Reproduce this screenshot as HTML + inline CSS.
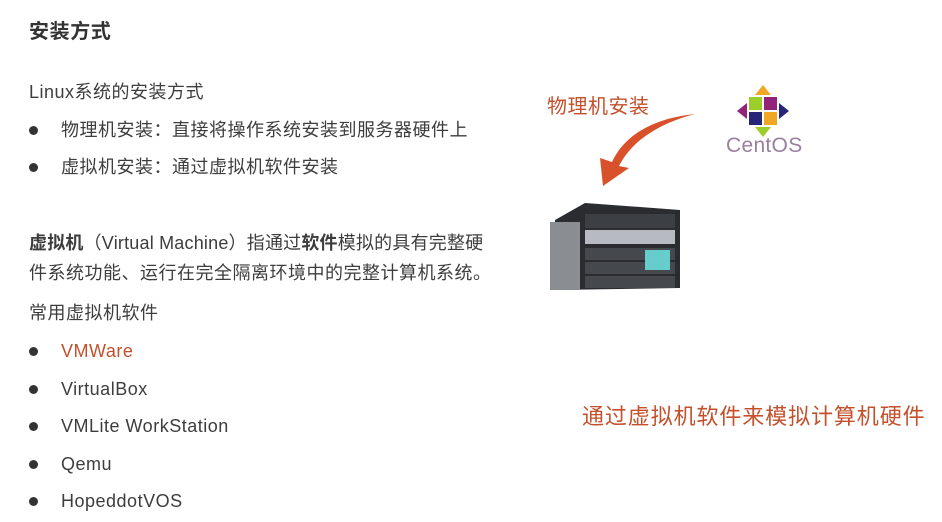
<!DOCTYPE html><html><head><meta charset="utf-8"><style>
body{margin:0;width:942px;height:522px;background:#fff;overflow:hidden;position:relative;font-family:"Liberation Sans","Noto Sans CJK SC",sans-serif;color:#3d3d3d}
.t{position:absolute;white-space:nowrap;font-size:18px;line-height:20px;letter-spacing:0.5px}
.d{position:absolute;width:9px;height:9px;border-radius:50%;background:#333;left:29px}
.r{color:#c4502c}
</style></head><body>
<div class="t" style="left:29px;top:22px;font-size:20px;font-weight:bold;color:#333;letter-spacing:0.6px">安装方式</div>
<div class="t" style="left:29px;top:82px">Linux系统的安装方式</div>
<div class="d" style="top:126px"></div><div class="t" style="left:61px;top:120px">物理机安装：直接将操作系统安装到服务器硬件上</div>
<div class="d" style="top:163px"></div><div class="t" style="left:61px;top:157px">虚拟机安装：通过虚拟机软件安装</div>
<div class="t" style="left:29px;top:233px;letter-spacing:0.2px"><b>虚拟机</b>（Virtual Machine）指通过<b>软件</b>模拟的具有完整硬</div>
<div class="t" style="left:29px;top:263px">件系统功能、运行在完全隔离环境中的完整计算机系统。</div>
<div class="t" style="left:29px;top:303px">常用虚拟机软件</div>
<div class="d" style="top:347px"></div><div class="t r" style="left:61px;top:341px">VMWare</div>
<div class="d" style="top:385px"></div><div class="t" style="left:61px;top:379px">VirtualBox</div>
<div class="d" style="top:422px"></div><div class="t" style="left:61px;top:416px">VMLite WorkStation</div>
<div class="d" style="top:460px"></div><div class="t" style="left:61px;top:454px">Qemu</div>
<div class="d" style="top:497px"></div><div class="t" style="left:61px;top:491px">HopeddotVOS</div>
<div class="t r" style="left:547px;top:97px;font-size:20px">物理机安装</div>
<div class="t r" style="left:582px;top:405px;font-size:22px;line-height:24px;letter-spacing:0.9px">通过虚拟机软件来模拟计算机硬件</div>
<svg style="position:absolute;left:585px;top:112px" width="115" height="78"><path d="M110 2 C70 6 40 22 27 50 L15 46 L18 74 L44 56 L34 54 C46 30 72 12 110 2Z" fill="#d9512a"/></svg>
<svg style="position:absolute;left:735px;top:83px" width="56" height="56" viewBox="0 0 56 56">
<rect x="16" y="16" width="24" height="24" fill="#fff" transform="rotate(45 28 28)"/>
<rect x="14" y="14" width="13" height="13" fill="#9ccd2a"/><rect x="29" y="14" width="13" height="13" fill="#932279"/>
<rect x="14" y="29" width="13" height="13" fill="#262577"/><rect x="29" y="29" width="13" height="13" fill="#efa724"/>
<polygon points="28,2 36,12 20,12" fill="#efa724"/><polygon points="28,54 36,44 20,44" fill="#9ccd2a"/>
<polygon points="2,28 12,20 12,36" fill="#932279"/><polygon points="54,28 44,20 44,36" fill="#262577"/></svg>
<div class="t" style="left:726px;top:134px;font-size:21px;line-height:24px;color:#9a7fa0;letter-spacing:0.3px">CentOS</div>
<svg style="position:absolute;left:545px;top:200px" width="140" height="92">
<polygon points="10,20 40,3 135,10 135,88 10,90" fill="#2a2c30"/>
<rect x="5" y="22" width="30" height="68" fill="#8a8d92"/>
<rect x="40" y="14" width="90" height="14" fill="#3c3f44"/><rect x="40" y="30" width="90" height="14" fill="#b7bac0"/>
<rect x="40" y="48" width="90" height="12" fill="#45484d"/><rect x="40" y="62" width="90" height="12" fill="#45484d"/><rect x="40" y="76" width="90" height="12" fill="#45484d"/>
<rect x="100" y="50" width="25" height="20" fill="#6cc"/></svg>
</body></html>
